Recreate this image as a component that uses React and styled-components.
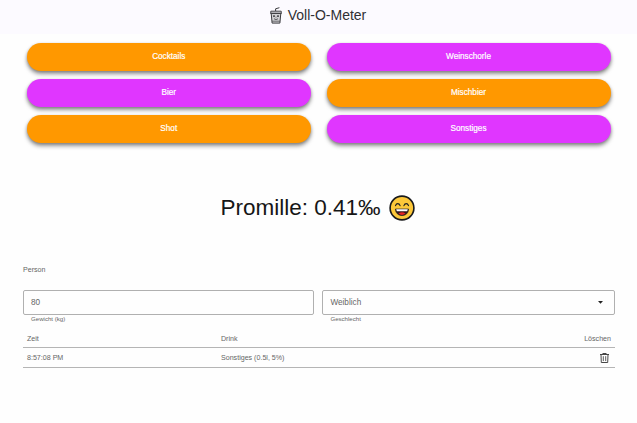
import React from "react";
import styled, { createGlobalStyle } from "styled-components";

const GlobalStyle = createGlobalStyle`
  * { box-sizing: border-box; }
  body {
    margin: 0;
    background: #fefefe;
    color: #666;
    font-family: "Liberation Sans", Arial, sans-serif;
    font-size: 7px;
  }
`;

const Page = styled.div`
  min-height: 423px;
  background: #fefefe;
`;

const Header = styled.header`
  height: 34px;
  padding: 0 2px 4px 0;
  display: flex;
  align-items: center;
  justify-content: center;
  gap: 5px;
  background: #fcfaff;
`;

const Title = styled.h1`
  margin: 0;
  font-size: 14px;
  line-height: 16px;
  font-weight: 400;
  color: #303034;
`;

const DrinkGrid = styled.section`
  display: grid;
  grid-template-columns: 283.5px 284px;
  gap: 8px 16px;
  padding: 9px 0 0 27px;
`;

const DrinkButton = styled.button`
  height: 28px;
  border: 0;
  border-radius: 14px;
  padding: 0;
  background: ${({ $tone }) => ($tone === "orange" ? "#ff9800" : "#e036ff")};
  box-shadow: 0 3px 4px rgba(0, 0, 0, 0.4), 0 1px 3px rgba(0, 0, 0, 0.2);
  color: #fff;
  font: 400 8.2px/28px "Liberation Sans", Arial, sans-serif;
  -webkit-text-stroke: 0.2px #fff;
`;

const Result = styled.section`
  display: flex;
  align-items: center;
  justify-content: center;
  gap: 8px;
  height: 30px;
  margin-top: 50px;
  padding-right: 2px;
`;

const ResultText = styled.h2`
  margin: 0;
  color: #161616;
  font-size: 22.5px;
  line-height: 30px;
  font-weight: 400;
`;

const Details = styled.section`
  width: 592px;
  margin: 42px 0 0 23px;
`;

const SectionLabel = styled.div`
  height: 25px;
  font-size: 7.1px;
  line-height: 11px;
`;

const Fields = styled.div`
  display: grid;
  grid-template-columns: 291.4px 292.6px;
  gap: 8px;
`;

const Field = styled.label`
  display: block;
`;

const FieldBox = styled.div`
  height: 25px;
  display: flex;
  align-items: center;
  justify-content: space-between;
  padding: 0 11px 0 7px;
  border: 1px solid #b0b0b0;
  border-radius: 2px;
  color: #666;
  font-size: 8.2px;
`;

const Hint = styled.div`
  padding-left: 8px;
  font-size: 6.1px;
  line-height: 8px;
`;

const Table = styled.table`
  width: 592px;
  margin-top: 7px;
  table-layout: fixed;
  border-collapse: separate;
  border-spacing: 0;
  font-size: 7.1px;
`;

const Cell = styled.td`
  width: ${({ $width }) => ($width ? `${$width}px` : "auto")};
  height: ${({ $head }) => ($head ? 18 : 20)}px;
  padding: 0 4px;
  border-bottom: 1px solid #b5b5b5;
  text-align: ${({ $right }) => ($right ? "right" : "left")};
  vertical-align: middle;
  font-weight: 400;
  line-height: 8px;
`;

const DeleteButton = styled.button`
  display: inline-flex;
  padding: 0;
  margin-right: 2px;
  border: 0;
  background: none;
  vertical-align: middle;
`;

function CupIcon() {
  return (
    <svg width="14" height="17" viewBox="0 0 14 17" fill="none" stroke="#3c3c40">
      <path d="M2.2 6.4l.9 9.7h7.8l.9-9.7z" fill="#d2d1d5" strokeWidth="1" />
      <path d="M6.6 4V1.8L10.4.7" strokeWidth="1" />
      <path d="M1 6.2h12M1.8 5.9V4.2h10.4v1.7" strokeWidth="1" />
      <path d="M3.1 14.2h7.8" strokeWidth=".7" />
      <path d="M4.2 8.3h1.6v1.6H4.2zM8.2 8.3h1.6v1.6H8.2z" fill="#3c3c40" stroke="none" />
      <path d="M5 11.6c1 1.2 3 1.2 4 0M7 9.7v.8" strokeWidth=".8" />
    </svg>
  );
}

function SmileIcon() {
  return (
    <svg width="26" height="26" viewBox="0 0 26 26">
      <circle cx="13" cy="13" r="11.9" fill="#fdc83a" stroke="#18191b" strokeWidth="1.6" />
      <path d="M6.5 10.6c.9-2.7 3.6-2.7 4.6 0M14.9 10.6c1-2.7 3.7-2.7 4.6 0" fill="none" stroke="#222" strokeWidth="1.15" strokeLinecap="round" />
      <path d="M6.4 14h13.2c-.2 4-2.7 6.5-6.6 6.5S6.6 18 6.4 14z" fill="#321719" stroke="#222" strokeWidth=".7" />
      <path d="M7.2 14.3h11.6l-.6 2H7.8z" fill="#fff" />
      <path d="M9.5 18.5c2.1-1.6 4.9-1.6 7 0-1.8 1.9-5.2 1.9-7 0z" fill="#e82524" />
    </svg>
  );
}

function TrashIcon() {
  return (
    <svg width="9" height="10" viewBox="0 0 9 10" fill="none" stroke="#333" strokeWidth=".9">
      <path d="M0 1.5h9M2.8 1.3V.5h3.4v.8M1 1.6l.3 7.9h6.4L8 1.6" />
      <path d="M3.3 3.2v4.9M5.7 3.2v4.9" strokeWidth=".8" />
    </svg>
  );
}

const drinks = [
  ["Cocktails", "orange"],
  ["Weinschorle", "purple"],
  ["Bier", "purple"],
  ["Mischbier", "orange"],
  ["Shot", "orange"],
  ["Sonstiges", "purple"],
];

export default function App() {
  return (
    <>
      <GlobalStyle />
      <Page>
        <Header>
          <CupIcon />
          <Title>Voll-O-Meter</Title>
        </Header>
        <DrinkGrid>
          {drinks.map(([name, tone]) => (
            <DrinkButton key={name} $tone={tone}>{name}</DrinkButton>
          ))}
        </DrinkGrid>
        <Result>
          <ResultText>Promille: 0.41‰</ResultText>
          <SmileIcon />
        </Result>
        <Details>
          <SectionLabel>Person</SectionLabel>
          <Fields>
            <Field>
              <FieldBox>80</FieldBox>
              <Hint>Gewicht (kg)</Hint>
            </Field>
            <Field>
              <FieldBox>
                Weiblich
                <svg width="5" height="3" viewBox="0 0 5 3">
                  <path d="M0 0h5L2.5 2.7z" fill="#222" />
                </svg>
              </FieldBox>
              <Hint>Geschlecht</Hint>
            </Field>
          </Fields>
          <Table>
            <thead>
              <tr>
                <Cell as="th" $head $width={194}>Zeit</Cell>
                <Cell as="th" $head $width={298}>Drink</Cell>
                <Cell as="th" $head $width={100} $right>Löschen</Cell>
              </tr>
            </thead>
            <tbody>
              <tr>
                <Cell>8:57:08 PM</Cell>
                <Cell>Sonstiges (0.5l, 5%)</Cell>
                <Cell $right>
                  <DeleteButton aria-label="Löschen"><TrashIcon /></DeleteButton>
                </Cell>
              </tr>
            </tbody>
          </Table>
        </Details>
      </Page>
    </>
  );
}
